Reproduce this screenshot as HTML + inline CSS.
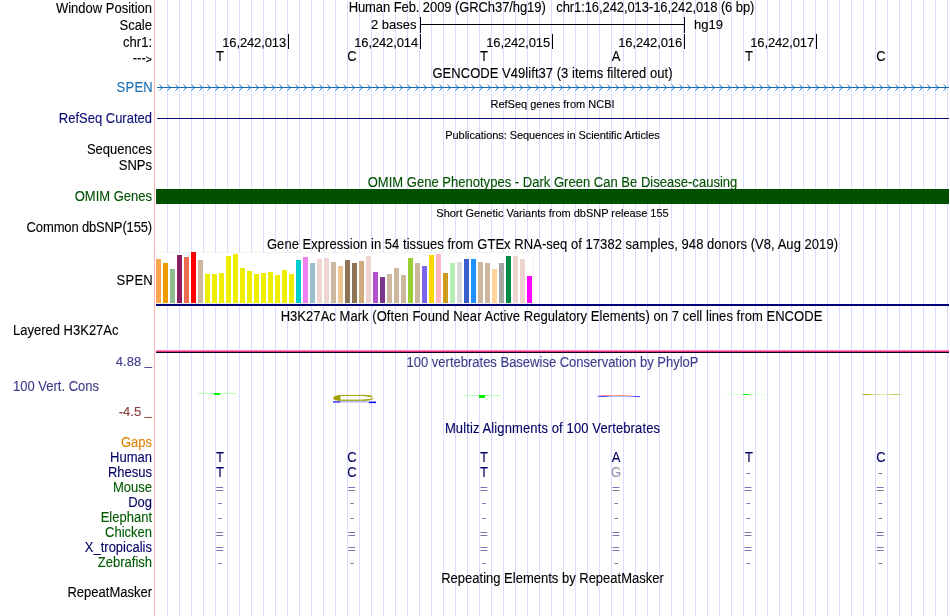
<!DOCTYPE html>
<html><head><meta charset="utf-8"><title>UCSC Genome Browser</title><style>
html,body{margin:0;padding:0;background:#fff;}
body{width:950px;height:616px;position:relative;overflow:hidden;will-change:transform;font-family:"Liberation Sans",sans-serif;color:#000;}
.t{position:absolute;white-space:pre;line-height:16px;height:16px;font-size:14px;transform:scaleX(.9286);transform-origin:0 0;-webkit-text-stroke:.12px;}
.r{text-align:right;left:0;width:152px;transform-origin:100% 0;}
.c{text-align:center;left:156px;width:793px;transform-origin:50% 0;}
.m{text-align:center;width:40px;transform-origin:50% 0;}
.s{font-size:11px;transform:none;}
.n{font-size:13px;transform:none;text-align:right;width:100px;letter-spacing:-.13px;}
.b{position:absolute;}
.g{position:absolute;top:0;width:1px;height:616px;background:#dcdcff;}
svg{position:absolute;left:0;top:0;}
</style></head><body>
<div class="g" style="left:167px"></div>
<div class="g" style="left:179px"></div>
<div class="g" style="left:191px"></div>
<div class="g" style="left:203px"></div>
<div class="g" style="left:215px"></div>
<div class="g" style="left:227px"></div>
<div class="g" style="left:239px"></div>
<div class="g" style="left:251px"></div>
<div class="g" style="left:263px"></div>
<div class="g" style="left:275px"></div>
<div class="g" style="left:287px"></div>
<div class="g" style="left:299px"></div>
<div class="g" style="left:311px"></div>
<div class="g" style="left:323px"></div>
<div class="g" style="left:335px"></div>
<div class="g" style="left:347px"></div>
<div class="g" style="left:359px"></div>
<div class="g" style="left:371px"></div>
<div class="g" style="left:383px"></div>
<div class="g" style="left:395px"></div>
<div class="g" style="left:407px"></div>
<div class="g" style="left:419px"></div>
<div class="g" style="left:431px"></div>
<div class="g" style="left:443px"></div>
<div class="g" style="left:455px"></div>
<div class="g" style="left:467px"></div>
<div class="g" style="left:479px"></div>
<div class="g" style="left:491px"></div>
<div class="g" style="left:503px"></div>
<div class="g" style="left:515px"></div>
<div class="g" style="left:527px"></div>
<div class="g" style="left:539px"></div>
<div class="g" style="left:551px"></div>
<div class="g" style="left:563px"></div>
<div class="g" style="left:575px"></div>
<div class="g" style="left:587px"></div>
<div class="g" style="left:599px"></div>
<div class="g" style="left:611px"></div>
<div class="g" style="left:623px"></div>
<div class="g" style="left:635px"></div>
<div class="g" style="left:647px"></div>
<div class="g" style="left:659px"></div>
<div class="g" style="left:671px"></div>
<div class="g" style="left:683px"></div>
<div class="g" style="left:695px"></div>
<div class="g" style="left:707px"></div>
<div class="g" style="left:719px"></div>
<div class="g" style="left:731px"></div>
<div class="g" style="left:743px"></div>
<div class="g" style="left:755px"></div>
<div class="g" style="left:767px"></div>
<div class="g" style="left:779px"></div>
<div class="g" style="left:791px"></div>
<div class="g" style="left:803px"></div>
<div class="g" style="left:815px"></div>
<div class="g" style="left:827px"></div>
<div class="g" style="left:839px"></div>
<div class="g" style="left:851px"></div>
<div class="g" style="left:863px"></div>
<div class="g" style="left:875px"></div>
<div class="g" style="left:887px"></div>
<div class="g" style="left:899px"></div>
<div class="g" style="left:911px"></div>
<div class="g" style="left:923px"></div>
<div class="g" style="left:935px"></div>
<div class="g" style="left:947px"></div>
<div class="b" style="left:154px;top:0;width:1px;height:616px;background:#ffb4b4"></div>
<div class="t r" style="top:0px;width:152px;color:#000;">Window Position</div>
<div class="t r" style="top:17px;width:152px;color:#000;">Scale</div>
<div class="t r" style="top:34px;width:152px;color:#000;">chr1:</div>
<div class="t r" style="top:50px;width:152px;color:#000;">---<span style="font-size:11.5px">&gt;</span></div>
<div class="t c" style="top:-1px;color:#000;letter-spacing:-0.092px;margin-left:-1px;">Human Feb. 2009 (GRCh37/hg19)   chr1:16,242,013-16,242,018 (6 bp)</div>
<div class="b" style="left:420px;top:17px;width:1px;height:16px;background:#000"></div>
<div class="b" style="left:684px;top:17px;width:1px;height:16px;background:#000"></div>
<div class="b" style="left:420px;top:24px;width:265px;height:1px;background:#000"></div>
<div class="t n" style="left:316.5px;letter-spacing:0;top:17px">2 bases</div>
<div class="t n" style="left:694px;text-align:left;letter-spacing:0;top:17px">hg19</div>
<div class="b" style="left:288px;top:34px;width:1px;height:15px;background:#000"></div>
<div class="t n" style="left:186px;top:35px">16,242,013</div>
<div class="b" style="left:420px;top:34px;width:1px;height:15px;background:#000"></div>
<div class="t n" style="left:318px;top:35px">16,242,014</div>
<div class="b" style="left:552px;top:34px;width:1px;height:15px;background:#000"></div>
<div class="t n" style="left:450px;top:35px">16,242,015</div>
<div class="b" style="left:684px;top:34px;width:1px;height:15px;background:#000"></div>
<div class="t n" style="left:582px;top:35px">16,242,016</div>
<div class="b" style="left:816px;top:34px;width:1px;height:15px;background:#000"></div>
<div class="t n" style="left:714px;top:35px">16,242,017</div>
<div class="t m" style="left:200.1px;top:48px">T</div>
<div class="t m" style="left:332.2px;top:48px">C</div>
<div class="t m" style="left:464.3px;top:48px">T</div>
<div class="t m" style="left:596.4px;top:48px">A</div>
<div class="t m" style="left:728.5px;top:48px">T</div>
<div class="t m" style="left:860.6px;top:48px">C</div>
<div class="t c" style="top:65px;color:#000;letter-spacing:0.046px;">GENCODE V49lift37 (3 items filtered out)</div>
<div class="t r" style="top:79px;width:153px;color:#186eb2;letter-spacing:.3px;">SPEN</div>
<div class="b" style="left:157px;top:87px;width:792px;height:1px;background:#1269b0"></div>
<svg width="950" height="616" viewBox="0 0 950 616" shape-rendering="crispEdges"><g fill="#1269b0"><path d="M161 86h1v3h-1zM169 86h1v3h-1zM177 86h1v3h-1zM185 86h1v3h-1zM193 86h1v3h-1zM201 86h1v3h-1zM209 86h1v3h-1zM217 86h1v3h-1zM225 86h1v3h-1zM233 86h1v3h-1zM241 86h1v3h-1zM249 86h1v3h-1zM257 86h1v3h-1zM265 86h1v3h-1zM273 86h1v3h-1zM281 86h1v3h-1zM289 86h1v3h-1zM297 86h1v3h-1zM305 86h1v3h-1zM313 86h1v3h-1zM321 86h1v3h-1zM329 86h1v3h-1zM337 86h1v3h-1zM345 86h1v3h-1zM353 86h1v3h-1zM361 86h1v3h-1zM369 86h1v3h-1zM377 86h1v3h-1zM385 86h1v3h-1zM393 86h1v3h-1zM401 86h1v3h-1zM409 86h1v3h-1zM417 86h1v3h-1zM425 86h1v3h-1zM433 86h1v3h-1zM441 86h1v3h-1zM449 86h1v3h-1zM457 86h1v3h-1zM465 86h1v3h-1zM473 86h1v3h-1zM481 86h1v3h-1zM489 86h1v3h-1zM497 86h1v3h-1zM505 86h1v3h-1zM513 86h1v3h-1zM521 86h1v3h-1zM529 86h1v3h-1zM537 86h1v3h-1zM545 86h1v3h-1zM553 86h1v3h-1zM561 86h1v3h-1zM569 86h1v3h-1zM577 86h1v3h-1zM585 86h1v3h-1zM593 86h1v3h-1zM601 86h1v3h-1zM609 86h1v3h-1zM617 86h1v3h-1zM625 86h1v3h-1zM633 86h1v3h-1zM641 86h1v3h-1zM649 86h1v3h-1zM657 86h1v3h-1zM665 86h1v3h-1zM673 86h1v3h-1zM681 86h1v3h-1zM689 86h1v3h-1zM697 86h1v3h-1zM705 86h1v3h-1zM713 86h1v3h-1zM721 86h1v3h-1zM729 86h1v3h-1zM737 86h1v3h-1zM745 86h1v3h-1zM753 86h1v3h-1zM761 86h1v3h-1zM769 86h1v3h-1zM777 86h1v3h-1zM785 86h1v3h-1zM793 86h1v3h-1zM801 86h1v3h-1zM809 86h1v3h-1zM817 86h1v3h-1zM825 86h1v3h-1zM833 86h1v3h-1zM841 86h1v3h-1zM849 86h1v3h-1zM857 86h1v3h-1zM865 86h1v3h-1zM873 86h1v3h-1zM881 86h1v3h-1zM889 86h1v3h-1zM897 86h1v3h-1zM905 86h1v3h-1zM913 86h1v3h-1zM921 86h1v3h-1zM929 86h1v3h-1zM937 86h1v3h-1zM945 86h1v3h-1z"/><path opacity=".9" d="M160 85h1v1h-1zM160 89h1v1h-1zM168 85h1v1h-1zM168 89h1v1h-1zM176 85h1v1h-1zM176 89h1v1h-1zM184 85h1v1h-1zM184 89h1v1h-1zM192 85h1v1h-1zM192 89h1v1h-1zM200 85h1v1h-1zM200 89h1v1h-1zM208 85h1v1h-1zM208 89h1v1h-1zM216 85h1v1h-1zM216 89h1v1h-1zM224 85h1v1h-1zM224 89h1v1h-1zM232 85h1v1h-1zM232 89h1v1h-1zM240 85h1v1h-1zM240 89h1v1h-1zM248 85h1v1h-1zM248 89h1v1h-1zM256 85h1v1h-1zM256 89h1v1h-1zM264 85h1v1h-1zM264 89h1v1h-1zM272 85h1v1h-1zM272 89h1v1h-1zM280 85h1v1h-1zM280 89h1v1h-1zM288 85h1v1h-1zM288 89h1v1h-1zM296 85h1v1h-1zM296 89h1v1h-1zM304 85h1v1h-1zM304 89h1v1h-1zM312 85h1v1h-1zM312 89h1v1h-1zM320 85h1v1h-1zM320 89h1v1h-1zM328 85h1v1h-1zM328 89h1v1h-1zM336 85h1v1h-1zM336 89h1v1h-1zM344 85h1v1h-1zM344 89h1v1h-1zM352 85h1v1h-1zM352 89h1v1h-1zM360 85h1v1h-1zM360 89h1v1h-1zM368 85h1v1h-1zM368 89h1v1h-1zM376 85h1v1h-1zM376 89h1v1h-1zM384 85h1v1h-1zM384 89h1v1h-1zM392 85h1v1h-1zM392 89h1v1h-1zM400 85h1v1h-1zM400 89h1v1h-1zM408 85h1v1h-1zM408 89h1v1h-1zM416 85h1v1h-1zM416 89h1v1h-1zM424 85h1v1h-1zM424 89h1v1h-1zM432 85h1v1h-1zM432 89h1v1h-1zM440 85h1v1h-1zM440 89h1v1h-1zM448 85h1v1h-1zM448 89h1v1h-1zM456 85h1v1h-1zM456 89h1v1h-1zM464 85h1v1h-1zM464 89h1v1h-1zM472 85h1v1h-1zM472 89h1v1h-1zM480 85h1v1h-1zM480 89h1v1h-1zM488 85h1v1h-1zM488 89h1v1h-1zM496 85h1v1h-1zM496 89h1v1h-1zM504 85h1v1h-1zM504 89h1v1h-1zM512 85h1v1h-1zM512 89h1v1h-1zM520 85h1v1h-1zM520 89h1v1h-1zM528 85h1v1h-1zM528 89h1v1h-1zM536 85h1v1h-1zM536 89h1v1h-1zM544 85h1v1h-1zM544 89h1v1h-1zM552 85h1v1h-1zM552 89h1v1h-1zM560 85h1v1h-1zM560 89h1v1h-1zM568 85h1v1h-1zM568 89h1v1h-1zM576 85h1v1h-1zM576 89h1v1h-1zM584 85h1v1h-1zM584 89h1v1h-1zM592 85h1v1h-1zM592 89h1v1h-1zM600 85h1v1h-1zM600 89h1v1h-1zM608 85h1v1h-1zM608 89h1v1h-1zM616 85h1v1h-1zM616 89h1v1h-1zM624 85h1v1h-1zM624 89h1v1h-1zM632 85h1v1h-1zM632 89h1v1h-1zM640 85h1v1h-1zM640 89h1v1h-1zM648 85h1v1h-1zM648 89h1v1h-1zM656 85h1v1h-1zM656 89h1v1h-1zM664 85h1v1h-1zM664 89h1v1h-1zM672 85h1v1h-1zM672 89h1v1h-1zM680 85h1v1h-1zM680 89h1v1h-1zM688 85h1v1h-1zM688 89h1v1h-1zM696 85h1v1h-1zM696 89h1v1h-1zM704 85h1v1h-1zM704 89h1v1h-1zM712 85h1v1h-1zM712 89h1v1h-1zM720 85h1v1h-1zM720 89h1v1h-1zM728 85h1v1h-1zM728 89h1v1h-1zM736 85h1v1h-1zM736 89h1v1h-1zM744 85h1v1h-1zM744 89h1v1h-1zM752 85h1v1h-1zM752 89h1v1h-1zM760 85h1v1h-1zM760 89h1v1h-1zM768 85h1v1h-1zM768 89h1v1h-1zM776 85h1v1h-1zM776 89h1v1h-1zM784 85h1v1h-1zM784 89h1v1h-1zM792 85h1v1h-1zM792 89h1v1h-1zM800 85h1v1h-1zM800 89h1v1h-1zM808 85h1v1h-1zM808 89h1v1h-1zM816 85h1v1h-1zM816 89h1v1h-1zM824 85h1v1h-1zM824 89h1v1h-1zM832 85h1v1h-1zM832 89h1v1h-1zM840 85h1v1h-1zM840 89h1v1h-1zM848 85h1v1h-1zM848 89h1v1h-1zM856 85h1v1h-1zM856 89h1v1h-1zM864 85h1v1h-1zM864 89h1v1h-1zM872 85h1v1h-1zM872 89h1v1h-1zM880 85h1v1h-1zM880 89h1v1h-1zM888 85h1v1h-1zM888 89h1v1h-1zM896 85h1v1h-1zM896 89h1v1h-1zM904 85h1v1h-1zM904 89h1v1h-1zM912 85h1v1h-1zM912 89h1v1h-1zM920 85h1v1h-1zM920 89h1v1h-1zM928 85h1v1h-1zM928 89h1v1h-1zM936 85h1v1h-1zM936 89h1v1h-1zM944 85h1v1h-1zM944 89h1v1h-1z"/><path opacity=".45" d="M159 84h1v1h-1zM159 90h1v1h-1zM167 84h1v1h-1zM167 90h1v1h-1zM175 84h1v1h-1zM175 90h1v1h-1zM183 84h1v1h-1zM183 90h1v1h-1zM191 84h1v1h-1zM191 90h1v1h-1zM199 84h1v1h-1zM199 90h1v1h-1zM207 84h1v1h-1zM207 90h1v1h-1zM215 84h1v1h-1zM215 90h1v1h-1zM223 84h1v1h-1zM223 90h1v1h-1zM231 84h1v1h-1zM231 90h1v1h-1zM239 84h1v1h-1zM239 90h1v1h-1zM247 84h1v1h-1zM247 90h1v1h-1zM255 84h1v1h-1zM255 90h1v1h-1zM263 84h1v1h-1zM263 90h1v1h-1zM271 84h1v1h-1zM271 90h1v1h-1zM279 84h1v1h-1zM279 90h1v1h-1zM287 84h1v1h-1zM287 90h1v1h-1zM295 84h1v1h-1zM295 90h1v1h-1zM303 84h1v1h-1zM303 90h1v1h-1zM311 84h1v1h-1zM311 90h1v1h-1zM319 84h1v1h-1zM319 90h1v1h-1zM327 84h1v1h-1zM327 90h1v1h-1zM335 84h1v1h-1zM335 90h1v1h-1zM343 84h1v1h-1zM343 90h1v1h-1zM351 84h1v1h-1zM351 90h1v1h-1zM359 84h1v1h-1zM359 90h1v1h-1zM367 84h1v1h-1zM367 90h1v1h-1zM375 84h1v1h-1zM375 90h1v1h-1zM383 84h1v1h-1zM383 90h1v1h-1zM391 84h1v1h-1zM391 90h1v1h-1zM399 84h1v1h-1zM399 90h1v1h-1zM407 84h1v1h-1zM407 90h1v1h-1zM415 84h1v1h-1zM415 90h1v1h-1zM423 84h1v1h-1zM423 90h1v1h-1zM431 84h1v1h-1zM431 90h1v1h-1zM439 84h1v1h-1zM439 90h1v1h-1zM447 84h1v1h-1zM447 90h1v1h-1zM455 84h1v1h-1zM455 90h1v1h-1zM463 84h1v1h-1zM463 90h1v1h-1zM471 84h1v1h-1zM471 90h1v1h-1zM479 84h1v1h-1zM479 90h1v1h-1zM487 84h1v1h-1zM487 90h1v1h-1zM495 84h1v1h-1zM495 90h1v1h-1zM503 84h1v1h-1zM503 90h1v1h-1zM511 84h1v1h-1zM511 90h1v1h-1zM519 84h1v1h-1zM519 90h1v1h-1zM527 84h1v1h-1zM527 90h1v1h-1zM535 84h1v1h-1zM535 90h1v1h-1zM543 84h1v1h-1zM543 90h1v1h-1zM551 84h1v1h-1zM551 90h1v1h-1zM559 84h1v1h-1zM559 90h1v1h-1zM567 84h1v1h-1zM567 90h1v1h-1zM575 84h1v1h-1zM575 90h1v1h-1zM583 84h1v1h-1zM583 90h1v1h-1zM591 84h1v1h-1zM591 90h1v1h-1zM599 84h1v1h-1zM599 90h1v1h-1zM607 84h1v1h-1zM607 90h1v1h-1zM615 84h1v1h-1zM615 90h1v1h-1zM623 84h1v1h-1zM623 90h1v1h-1zM631 84h1v1h-1zM631 90h1v1h-1zM639 84h1v1h-1zM639 90h1v1h-1zM647 84h1v1h-1zM647 90h1v1h-1zM655 84h1v1h-1zM655 90h1v1h-1zM663 84h1v1h-1zM663 90h1v1h-1zM671 84h1v1h-1zM671 90h1v1h-1zM679 84h1v1h-1zM679 90h1v1h-1zM687 84h1v1h-1zM687 90h1v1h-1zM695 84h1v1h-1zM695 90h1v1h-1zM703 84h1v1h-1zM703 90h1v1h-1zM711 84h1v1h-1zM711 90h1v1h-1zM719 84h1v1h-1zM719 90h1v1h-1zM727 84h1v1h-1zM727 90h1v1h-1zM735 84h1v1h-1zM735 90h1v1h-1zM743 84h1v1h-1zM743 90h1v1h-1zM751 84h1v1h-1zM751 90h1v1h-1zM759 84h1v1h-1zM759 90h1v1h-1zM767 84h1v1h-1zM767 90h1v1h-1zM775 84h1v1h-1zM775 90h1v1h-1zM783 84h1v1h-1zM783 90h1v1h-1zM791 84h1v1h-1zM791 90h1v1h-1zM799 84h1v1h-1zM799 90h1v1h-1zM807 84h1v1h-1zM807 90h1v1h-1zM815 84h1v1h-1zM815 90h1v1h-1zM823 84h1v1h-1zM823 90h1v1h-1zM831 84h1v1h-1zM831 90h1v1h-1zM839 84h1v1h-1zM839 90h1v1h-1zM847 84h1v1h-1zM847 90h1v1h-1zM855 84h1v1h-1zM855 90h1v1h-1zM863 84h1v1h-1zM863 90h1v1h-1zM871 84h1v1h-1zM871 90h1v1h-1zM879 84h1v1h-1zM879 90h1v1h-1zM887 84h1v1h-1zM887 90h1v1h-1zM895 84h1v1h-1zM895 90h1v1h-1zM903 84h1v1h-1zM903 90h1v1h-1zM911 84h1v1h-1zM911 90h1v1h-1zM919 84h1v1h-1zM919 90h1v1h-1zM927 84h1v1h-1zM927 90h1v1h-1zM935 84h1v1h-1zM935 90h1v1h-1zM943 84h1v1h-1zM943 90h1v1h-1z"/></g></svg>
<div class="t c s" style="top:96px;color:#000;">RefSeq genes from NCBI</div>
<div class="t r" style="top:110px;width:152px;color:#0c0c78;">RefSeq Curated</div>
<div class="b" style="left:157px;top:118px;width:792px;height:1px;background:#0c0c78"></div>
<div class="t c s" style="top:127px;color:#000;letter-spacing:-0.07px;">Publications: Sequences in Scientific Articles</div>
<div class="t r" style="top:141px;width:152px;color:#000;">Sequences</div>
<div class="t r" style="top:157px;width:152px;color:#000;">SNPs</div>
<div class="t c" style="top:174px;color:#005000;letter-spacing:0.022px;">OMIM Gene Phenotypes - Dark Green Can Be Disease-causing</div>
<div class="t r" style="top:188px;width:152px;color:#005000;">OMIM Genes</div>
<div class="b" style="left:156px;top:189px;width:793px;height:15px;background:#005000"></div>
<div class="t c s" style="top:205px;color:#000;letter-spacing:-0.02px;">Short Genetic Variants from dbSNP release 155</div>
<div class="t r" style="top:219px;width:152px;color:#000;letter-spacing:-0.16px;">Common dbSNP(155)</div>
<div class="t c" style="top:236px;color:#000;letter-spacing:0.045px;">Gene Expression in 54 tissues from GTEx RNA-seq of 17382 samples, 948 donors (V8, Aug 2019)</div>
<div class="t r" style="top:272px;width:153px;color:#000;letter-spacing:.3px;">SPEN</div>
<div class="b" style="left:156px;top:252px;width:378px;height:52px;background:#fff"></div>
<div class="b" style="left:156px;top:252px;width:378px;height:1px;background:#f3f3f3"></div>
<div class="b" style="left:533px;top:252px;width:1px;height:51px;background:#f3f3f3"></div>
<div class="b" style="left:156px;top:252px;width:1px;height:51px;background:#f6f6f6"></div>
<div class="b" style="left:156px;top:303px;width:378px;height:1px;background:#f1f1ec"></div>
<div class="b" style="left:156px;top:259px;width:5px;height:44px;background:#FFA54F"></div>
<div class="b" style="left:163px;top:263px;width:5px;height:40px;background:#EE9A00"></div>
<div class="b" style="left:170px;top:269px;width:5px;height:34px;background:#8FBC8F"></div>
<div class="b" style="left:177px;top:255px;width:5px;height:48px;background:#8B1C62"></div>
<div class="b" style="left:184px;top:257px;width:5px;height:46px;background:#EE6A50"></div>
<div class="b" style="left:191px;top:252px;width:5px;height:51px;background:#FF0000"></div>
<div class="b" style="left:198px;top:260px;width:5px;height:43px;background:#CDB79E"></div>
<div class="b" style="left:205px;top:274px;width:5px;height:29px;background:#EEEE00"></div>
<div class="b" style="left:212px;top:274px;width:5px;height:29px;background:#EEEE00"></div>
<div class="b" style="left:219px;top:273px;width:5px;height:30px;background:#EEEE00"></div>
<div class="b" style="left:226px;top:256px;width:5px;height:47px;background:#EEEE00"></div>
<div class="b" style="left:233px;top:254px;width:5px;height:49px;background:#EEEE00"></div>
<div class="b" style="left:240px;top:268px;width:5px;height:35px;background:#EEEE00"></div>
<div class="b" style="left:247px;top:271px;width:5px;height:32px;background:#EEEE00"></div>
<div class="b" style="left:254px;top:274px;width:5px;height:29px;background:#EEEE00"></div>
<div class="b" style="left:261px;top:273px;width:5px;height:30px;background:#EEEE00"></div>
<div class="b" style="left:268px;top:272px;width:5px;height:31px;background:#EEEE00"></div>
<div class="b" style="left:275px;top:275px;width:5px;height:28px;background:#EEEE00"></div>
<div class="b" style="left:282px;top:270px;width:5px;height:33px;background:#EEEE00"></div>
<div class="b" style="left:289px;top:274px;width:5px;height:29px;background:#EEEE00"></div>
<div class="b" style="left:296px;top:260px;width:5px;height:43px;background:#00CDCD"></div>
<div class="b" style="left:303px;top:257px;width:5px;height:46px;background:#EE82EE"></div>
<div class="b" style="left:310px;top:263px;width:5px;height:40px;background:#9AC0CD"></div>
<div class="b" style="left:317px;top:259px;width:5px;height:44px;background:#EED5D2"></div>
<div class="b" style="left:324px;top:258px;width:5px;height:45px;background:#EED5D2"></div>
<div class="b" style="left:331px;top:262px;width:5px;height:41px;background:#CDB79E"></div>
<div class="b" style="left:338px;top:266px;width:5px;height:37px;background:#EEC591"></div>
<div class="b" style="left:345px;top:260px;width:5px;height:43px;background:#8B7355"></div>
<div class="b" style="left:352px;top:263px;width:5px;height:40px;background:#8B7355"></div>
<div class="b" style="left:359px;top:261px;width:5px;height:42px;background:#CDAA7D"></div>
<div class="b" style="left:366px;top:256px;width:5px;height:47px;background:#EED5D2"></div>
<div class="b" style="left:373px;top:272px;width:5px;height:31px;background:#B452CD"></div>
<div class="b" style="left:380px;top:277px;width:5px;height:26px;background:#7A378B"></div>
<div class="b" style="left:387px;top:274px;width:5px;height:29px;background:#CDB79E"></div>
<div class="b" style="left:394px;top:268px;width:5px;height:35px;background:#CDB79E"></div>
<div class="b" style="left:401px;top:275px;width:5px;height:28px;background:#CDB79E"></div>
<div class="b" style="left:408px;top:258px;width:5px;height:45px;background:#9ACD32"></div>
<div class="b" style="left:415px;top:263px;width:5px;height:40px;background:#CDB79E"></div>
<div class="b" style="left:422px;top:266px;width:5px;height:37px;background:#7A67EE"></div>
<div class="b" style="left:429px;top:255px;width:5px;height:48px;background:#FFD700"></div>
<div class="b" style="left:436px;top:254px;width:5px;height:49px;background:#FFB6C1"></div>
<div class="b" style="left:443px;top:273px;width:5px;height:30px;background:#CD9B1D"></div>
<div class="b" style="left:450px;top:263px;width:5px;height:40px;background:#B4EEB4"></div>
<div class="b" style="left:457px;top:262px;width:5px;height:41px;background:#D9D9D9"></div>
<div class="b" style="left:464px;top:259px;width:5px;height:44px;background:#3A5FCD"></div>
<div class="b" style="left:471px;top:259px;width:5px;height:44px;background:#1E90FF"></div>
<div class="b" style="left:478px;top:262px;width:5px;height:41px;background:#CDB79E"></div>
<div class="b" style="left:485px;top:263px;width:5px;height:40px;background:#CDB79E"></div>
<div class="b" style="left:492px;top:269px;width:5px;height:34px;background:#FFD39B"></div>
<div class="b" style="left:499px;top:263px;width:5px;height:40px;background:#A6A6A6"></div>
<div class="b" style="left:506px;top:256px;width:5px;height:47px;background:#008B45"></div>
<div class="b" style="left:513px;top:256px;width:5px;height:47px;background:#EED5D2"></div>
<div class="b" style="left:520px;top:259px;width:5px;height:44px;background:#EED5D2"></div>
<div class="b" style="left:527px;top:276px;width:5px;height:27px;background:#FF00FF"></div>
<div class="b" style="left:156px;top:304px;width:793px;height:2px;background:#000078"></div>
<div class="t c" style="top:308px;color:#000;letter-spacing:0.052px;margin-left:-1px;">H3K27Ac Mark (Often Found Near Active Regulatory Elements) on 7 cell lines from ENCODE</div>
<div class="t" style="left:12.6px;top:322px;color:#000;">Layered H3K27Ac</div>
<div class="b" style="left:156px;top:350px;width:793px;height:1px;background:#ff80c8"></div>
<div class="b" style="left:156px;top:351px;width:793px;height:1px;background:#e03070"></div>
<div class="b" style="left:156px;top:352px;width:793px;height:1px;background:#140028"></div>
<div class="t c" style="top:354px;color:#3c3c8c;">100 vertebrates Basewise Conservation by PhyloP</div>
<div class="t n" style="left:52px;top:354px;color:#3c3c8c;letter-spacing:0">4.88 <span style="position:relative;top:-1px">_</span></div>
<div class="t" style="left:13px;top:378px;color:#3c3c8c;">100 Vert. Cons</div>
<div class="t n" style="left:52px;top:404px;color:#8c3c3c;letter-spacing:0">-4.5 <span style="position:relative;top:-1px">_</span></div>
<div class="b" style="left:198px;top:393px;width:38px;height:1px;background:#b4ffb4"></div>
<div class="b" style="left:214px;top:393px;width:6px;height:2px;background:#00ee00"></div>
<div class="b" style="left:463px;top:395px;width:38px;height:1px;background:#b4ffb4"></div>
<div class="b" style="left:479px;top:395px;width:6px;height:3px;background:#00ee00"></div>
<div class="b" style="left:727px;top:394px;width:38px;height:1px;background:#dcffdc"></div>
<div class="b" style="left:743px;top:394px;width:6px;height:1px;background:#00ee00"></div>
<svg width="950" height="616" viewBox="0 0 950 616"><g fill="#a0a000"><rect x="338" y="394.9" width="28" height="1.1" opacity=".9"/><rect x="338" y="399.6" width="28" height="1.2"/><path d="M333 398L334.5 396.3L339 394.9L340.5 396L340.5 399.6L339 400.8L334.5 399.9Z"/><path d="M364 394.9L369 395.2L372.4 396L372.4 397.3L368 396.8L364 396Z"/><path d="M364 400.8L369 400.4L373.6 399L373.6 398.2L369 399L364 399.6Z"/></g><rect x="333" y="401.1" width="7.5" height="1.6" fill="#4848ff"/><rect x="340.5" y="401" width="28.5" height="1.5" fill="#b4b4ff"/><rect x="369" y="401.6" width="7" height="1.5" fill="#0000ff"/><defs><linearGradient id="gr"><stop offset="0" stop-color="#ff7070" stop-opacity=".15"/><stop offset=".25" stop-color="#ff7070" stop-opacity=".85"/><stop offset=".45" stop-color="#ff7070" stop-opacity=".55"/><stop offset=".65" stop-color="#ff7070" stop-opacity=".9"/><stop offset=".88" stop-color="#ff7070" stop-opacity=".4"/><stop offset="1" stop-color="#ff7070" stop-opacity=".05"/></linearGradient><linearGradient id="gb"><stop offset="0" stop-color="#9090ff"/><stop offset=".12" stop-color="#3030ff"/><stop offset=".3" stop-color="#a8a8ff"/><stop offset=".55" stop-color="#c8c8ff"/><stop offset=".8" stop-color="#9898ff"/><stop offset=".9" stop-color="#3838ff"/><stop offset="1" stop-color="#4848ff"/></linearGradient><linearGradient id="go"><stop offset="0" stop-color="#d2d278"/><stop offset=".12" stop-color="#aaaa14"/><stop offset=".3" stop-color="#dcdc96"/><stop offset=".6" stop-color="#e8e8b8"/><stop offset=".85" stop-color="#c3c350"/><stop offset="1" stop-color="#ebebc0"/></linearGradient></defs><rect x="596" y="395" width="39" height="1" fill="url(#gr)"/><rect x="597.5" y="396" width="42.5" height="1" fill="url(#gb)"/><rect x="861.5" y="394" width="40.5" height="1" fill="url(#go)"/></svg>
<div class="t c" style="top:420px;color:#000064;letter-spacing:0.126px;">Multiz Alignments of 100 Vertebrates</div>
<div class="t r" style="top:434px;width:152px;color:#e08000;">Gaps</div>
<div class="t r" style="top:449px;width:152px;color:#000064;">Human</div>
<div class="t r" style="top:464px;width:152px;color:#000064;">Rhesus</div>
<div class="t r" style="top:479px;width:152px;color:#005a00;">Mouse</div>
<div class="t r" style="top:494px;width:152px;color:#000064;">Dog</div>
<div class="t r" style="top:509px;width:152px;color:#005a00;">Elephant</div>
<div class="t r" style="top:524px;width:152px;color:#005a00;">Chicken</div>
<div class="t r" style="top:539px;width:152px;color:#000064;">X_tropicalis</div>
<div class="t r" style="top:554px;width:152px;color:#005a00;">Zebrafish</div>
<div class="t m" style="left:200.1px;top:449px;color:#000064">T</div>
<div class="t m" style="left:332.2px;top:449px;color:#000064">C</div>
<div class="t m" style="left:464.3px;top:449px;color:#000064">T</div>
<div class="t m" style="left:596.4px;top:449px;color:#000064">A</div>
<div class="t m" style="left:728.5px;top:449px;color:#000064">T</div>
<div class="t m" style="left:860.6px;top:449px;color:#000064">C</div>
<div class="t m" style="left:200.1px;top:464px;color:#000064">T</div>
<div class="t m" style="left:332.2px;top:464px;color:#000064">C</div>
<div class="t m" style="left:464.3px;top:464px;color:#000064">T</div>
<div class="t m" style="left:596.4px;top:464px;color:#9696b4">G</div>
<svg width="950" height="616" viewBox="0 0 950 616"><g fill="#7878b0"><rect x="746.5" y="473" width="3.6" height="1"/><rect x="878.6" y="473" width="3.6" height="1"/><rect x="216.2" y="487" width="6.9" height="1"/><rect x="216.2" y="490" width="6.9" height="1"/><rect x="348.3" y="487" width="6.9" height="1"/><rect x="348.3" y="490" width="6.9" height="1"/><rect x="480.4" y="487" width="6.9" height="1"/><rect x="480.4" y="490" width="6.9" height="1"/><rect x="612.5" y="487" width="6.9" height="1"/><rect x="612.5" y="490" width="6.9" height="1"/><rect x="744.6" y="487" width="6.9" height="1"/><rect x="744.6" y="490" width="6.9" height="1"/><rect x="876.7" y="487" width="6.9" height="1"/><rect x="876.7" y="490" width="6.9" height="1"/><rect x="218.1" y="503" width="3.6" height="1"/><rect x="350.2" y="503" width="3.6" height="1"/><rect x="482.3" y="503" width="3.6" height="1"/><rect x="614.4" y="503" width="3.6" height="1"/><rect x="746.5" y="503" width="3.6" height="1"/><rect x="878.6" y="503" width="3.6" height="1"/><rect x="218.1" y="518" width="3.6" height="1"/><rect x="350.2" y="518" width="3.6" height="1"/><rect x="482.3" y="518" width="3.6" height="1"/><rect x="614.4" y="518" width="3.6" height="1"/><rect x="746.5" y="518" width="3.6" height="1"/><rect x="878.6" y="518" width="3.6" height="1"/><rect x="216.2" y="532" width="6.9" height="1"/><rect x="216.2" y="535" width="6.9" height="1"/><rect x="348.3" y="532" width="6.9" height="1"/><rect x="348.3" y="535" width="6.9" height="1"/><rect x="480.4" y="532" width="6.9" height="1"/><rect x="480.4" y="535" width="6.9" height="1"/><rect x="612.5" y="532" width="6.9" height="1"/><rect x="612.5" y="535" width="6.9" height="1"/><rect x="744.6" y="532" width="6.9" height="1"/><rect x="744.6" y="535" width="6.9" height="1"/><rect x="876.7" y="532" width="6.9" height="1"/><rect x="876.7" y="535" width="6.9" height="1"/><rect x="216.2" y="547" width="6.9" height="1"/><rect x="216.2" y="550" width="6.9" height="1"/><rect x="348.3" y="547" width="6.9" height="1"/><rect x="348.3" y="550" width="6.9" height="1"/><rect x="480.4" y="547" width="6.9" height="1"/><rect x="480.4" y="550" width="6.9" height="1"/><rect x="612.5" y="547" width="6.9" height="1"/><rect x="612.5" y="550" width="6.9" height="1"/><rect x="744.6" y="547" width="6.9" height="1"/><rect x="744.6" y="550" width="6.9" height="1"/><rect x="876.7" y="547" width="6.9" height="1"/><rect x="876.7" y="550" width="6.9" height="1"/><rect x="218.1" y="563" width="3.6" height="1"/><rect x="350.2" y="563" width="3.6" height="1"/><rect x="482.3" y="563" width="3.6" height="1"/><rect x="614.4" y="563" width="3.6" height="1"/><rect x="746.5" y="563" width="3.6" height="1"/><rect x="878.6" y="563" width="3.6" height="1"/></g></svg>
<div class="t c" style="top:570px;color:#000;">Repeating Elements by RepeatMasker</div>
<div class="t r" style="top:584px;width:152px;color:#000;">RepeatMasker</div>
</body></html>
